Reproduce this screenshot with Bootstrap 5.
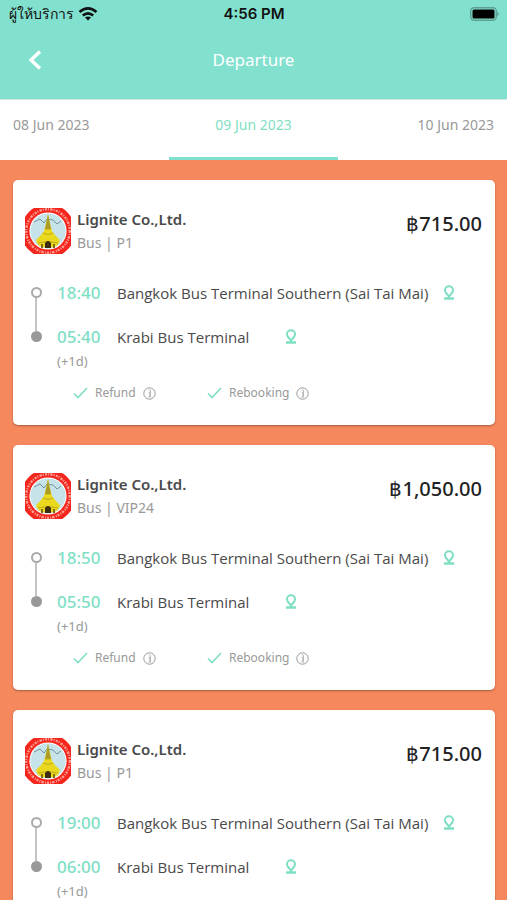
<!DOCTYPE html>
<html lang="en">
<head>
<meta charset="utf-8">
<meta name="viewport" content="width=device-width, initial-scale=1">
<title>Departure</title>
<link rel="stylesheet" href="https://cdn.jsdelivr.net/npm/bootstrap@5.3.0/dist/css/bootstrap.min.css">
<style>
:root { --mint: #82e1ce; --mint-ink: #7fdfc5; --coral: #f6885e; --ink: #4a4a4a; --soft: #999; }
body { font-family: "Noto Sans", "Open Sans", sans-serif; background: var(--coral); color: var(--ink); }
button { font: inherit; color: inherit; }
svg { display: block; }
.topbar { background: var(--mint); }
.status { height: 28px; padding: 0 8px 0 9px; color: #111; font-family: Inter, sans-serif; font-size: 15px; line-height: 28px; }
.status > * { flex: 1 1 0; }
.carrier { font-size: 14px; font-weight: 500; }
.clock { font-weight: 600; }
.titlebar { height: 71px; padding: 0 24px 8px; }
.titlebar > * { flex: 1 1 0; }
.titlebar h1 { font-size: 17px; line-height: 24px; color: #fff; font-weight: 400; }
.plain { display: block; background: none; border: 0; padding: 0; }
.dates { height: 61px; background: #fff; border-top: 1px solid #d5e5e1; }
.dates a { flex: 1 1 0; padding: 13px 13px 0; font-size: 14px; line-height: 24px; color: var(--soft); text-decoration: none; border-bottom: 3px solid transparent; }
.dates a.current { color: var(--mint-ink); border-color: var(--mint); }
.trips { padding: 20px 12px 20px 13px; gap: 20px; }
.trip { background: #fff; border-radius: 5px; padding: 28px 13px 20px 12px; box-shadow: 0 1px 2px rgba(90, 50, 30, .5); }
.trip-operator { padding-left: 6px; }
.operator { font-size: 15px; line-height: 22px; font-weight: 600; }
.vehicle { font-size: 14px; line-height: 26px; color: var(--soft); }
.fare { font-size: 20px; line-height: 32px; font-weight: 500; color: #222; }
.route { margin-top: 25px; }
.rail { width: 22px; padding: 6px 0; }
.dot-open, .dot-full { width: 11px; height: 11px; border-radius: 50%; border: 2px solid #aaa; }
.dot-full { background: #999; border-color: #999; }
.rail-line { width: 2px; height: 33px; background: #c4c4c4; }
.stops { padding-left: 10px; }
.stop { height: 24px; line-height: 24px; }
.stop + .stop { margin-top: 20px; }
.hour { width: 60px; font-size: 17px; font-weight: 500; color: var(--mint-ink); }
.place { font-family: "Open Sans", "Noto Sans", sans-serif; font-size: 15px; min-width: 168px; padding-right: 15px; }
.next-day { font-size: 13px; line-height: 24px; color: var(--soft); }
.perks { padding-left: 48px; margin-top: 8px; font-size: 12px; line-height: 24px; color: var(--soft); }
.perk { gap: 7px; min-width: 134px; }
</style>
<script src="https://cdn.jsdelivr.net/npm/bootstrap@5.3.0/dist/js/bootstrap.bundle.min.js"></script>
</head>
<body class="vh-100 overflow-hidden">
<svg width="0" height="0" class="position-absolute" aria-hidden="true">
  <defs>
    <clipPath id="seal-clip"><circle cx="23" cy="23" r="27"/></clipPath>
    <symbol id="seal" viewBox="0 0 46 46">
      <g clip-path="url(#seal-clip)">
        <rect width="46" height="46" fill="#f5261d"/>
        <circle cx="23" cy="23" r="21.800" fill="none" stroke="#ff9d92" stroke-width="2.400" stroke-dasharray="2 1 1 1.4 2.4 1 1 1.2"/>
        <circle cx="23" cy="23" r="18.600" fill="#fff"/>
        <circle cx="23" cy="23" r="17.600" fill="#c5e3e9"/>
        <path d="M9 14q4-2 6-3l4 4 3-4 6 1 4 4 4-3" fill="none" stroke="#74929b"/>
        <path d="M23 6l2 9 2 8 3 4 5 5-2 5q-10 6-20 0l-2-5 5-5 3-4 2-8z" fill="#ead81f"/>
        <path d="M23 6l1.500 8 1.500 7h-6l1.500-7z" fill="#a99c27"/>
        <path d="M20 21h6M18 25q5 3 10 0M13 35q10-3 20 0" fill="none" stroke="#c0aa18"/>
        <path d="M20 40v-5q3-4 6 0v5z" fill="#3b2c12"/>
        <path d="M17 36v4M29 36v4" stroke="#866912" stroke-width="2"/>
      </g>
    </symbol>
    <symbol id="pin" viewBox="0 0 12 16">
      <path d="M6 11.300C4 9 1.900 7.600 1.900 5.300a4.100 4.100 0 0 1 8.200 0C10.100 7.600 8 9 6 11.300z" fill="none" stroke="#7fdfc5" stroke-width="2"/>
      <path d="M6 10v3M1 13.500h10" fill="none" stroke="#7fdfc5" stroke-width="2.400"/>
    </symbol>
    <symbol id="tick" viewBox="0 0 15 12"><path d="M1 6.500l4 4L14 1" fill="none" stroke="#7fdfc5" stroke-width="1.600"/></symbol>
    <symbol id="info" viewBox="0 0 13 13">
      <circle cx="6.500" cy="6.500" r="5.700" fill="none" stroke="#999"/>
      <path d="M5.500 5.200h1.300v4.600M5.300 10h3M5.600 3.200q1-1.200 1.900 0v6.300" fill="none" stroke="#aaa" stroke-width=".8"/>
    </symbol>
  </defs>
</svg>

<header class="topbar">
  <div class="status d-flex align-items-center">
    <div class="d-flex align-items-center gap-1">
      <span class="carrier">ผู้ให้บริการ</span>
      <svg width="20" height="14" viewBox="0 0 20 14" role="img" aria-label="Wi-Fi"><g fill="none" stroke="#111" stroke-width="2.600"><path d="M1.500 5q8.500-7.200 17 0"/><path d="M4.800 8.500q5.200-4.400 10.400 0"/></g><path d="M10 13.500l-3-3q3-2.200 6 0z" fill="#111"/></svg>
    </div>
    <div class="clock text-center">4:56 PM</div>
    <div class="d-flex justify-content-end">
      <svg width="30" height="14" viewBox="0 0 30 14" role="img" aria-label="Battery"><rect x="1.700" y=".7" width="25.600" height="12.600" rx="3.500" fill="none" stroke="#5d9f92" stroke-width="1.400"/><rect x="3.500" y="2.500" width="22" height="9" rx="1.500" fill="#000"/><path d="M28.300 4.500q3 2.500 0 5z" fill="#5d9f92"/></svg>
    </div>
  </div>
  <div class="titlebar d-flex align-items-center">
    <div><button class="plain" type="button" aria-label="Back"><svg width="20" height="20" viewBox="0 0 20 20"><path d="M16 1.500L7 10l9 8.500" fill="none" stroke="#fff" stroke-width="3.400"/></svg></button></div>
    <h1 class="m-0 text-center">Departure</h1>
    <div></div>
  </div>
</header>
<nav class="dates d-flex" aria-label="Travel date">
  <a href="#previous">08 Jun 2023</a>
  <a class="current text-center" href="#selected" aria-current="date">09 Jun 2023</a>
  <a class="text-end" href="#next">10 Jun 2023</a>
</nav>

<main class="trips d-flex flex-column">
  <article class="trip">
    <div class="d-flex">
      <svg class="flex-shrink-0" width="46" height="46" role="img" aria-label="Operator logo"><use href="#seal"/></svg>
      <div class="flex-grow-1 trip-operator">
        <div class="operator">Lignite Co.,Ltd.</div>
        <div class="vehicle">Bus | P1</div>
      </div>
      <div class="fare">฿715.00</div>
    </div>
    <div class="route d-flex">
      <div class="rail d-flex flex-column align-items-center"><span class="dot-open"></span><span class="rail-line"></span><span class="dot-full"></span></div>
      <div class="stops">
        <div class="stop d-flex align-items-center"><span class="hour">18:40</span><span class="place">Bangkok Bus Terminal Southern (Sai Tai Mai)</span><button class="plain" type="button" aria-label="Show on map"><svg width="12" height="16"><use href="#pin"/></svg></button></div>
        <div class="stop d-flex align-items-center"><span class="hour">05:40</span><span class="place">Krabi Bus Terminal</span><button class="plain" type="button" aria-label="Show on map"><svg width="12" height="16"><use href="#pin"/></svg></button></div>
        <div class="next-day">(+1d)</div>
      </div>
    </div>
    <div class="perks d-flex">
      <div class="perk d-flex align-items-center"><svg width="15" height="12"><use href="#tick"/></svg><span>Refund</span><button class="plain" type="button" aria-label="Refund details"><svg width="13" height="13"><use href="#info"/></svg></button></div>
      <div class="perk d-flex align-items-center"><svg width="15" height="12"><use href="#tick"/></svg><span>Rebooking</span><button class="plain" type="button" aria-label="Rebooking details"><svg width="13" height="13"><use href="#info"/></svg></button></div>
    </div>
  </article>

  <article class="trip">
    <div class="d-flex">
      <svg class="flex-shrink-0" width="46" height="46" role="img" aria-label="Operator logo"><use href="#seal"/></svg>
      <div class="flex-grow-1 trip-operator">
        <div class="operator">Lignite Co.,Ltd.</div>
        <div class="vehicle">Bus | VIP24</div>
      </div>
      <div class="fare">฿1,050.00</div>
    </div>
    <div class="route d-flex">
      <div class="rail d-flex flex-column align-items-center"><span class="dot-open"></span><span class="rail-line"></span><span class="dot-full"></span></div>
      <div class="stops">
        <div class="stop d-flex align-items-center"><span class="hour">18:50</span><span class="place">Bangkok Bus Terminal Southern (Sai Tai Mai)</span><button class="plain" type="button" aria-label="Show on map"><svg width="12" height="16"><use href="#pin"/></svg></button></div>
        <div class="stop d-flex align-items-center"><span class="hour">05:50</span><span class="place">Krabi Bus Terminal</span><button class="plain" type="button" aria-label="Show on map"><svg width="12" height="16"><use href="#pin"/></svg></button></div>
        <div class="next-day">(+1d)</div>
      </div>
    </div>
    <div class="perks d-flex">
      <div class="perk d-flex align-items-center"><svg width="15" height="12"><use href="#tick"/></svg><span>Refund</span><button class="plain" type="button" aria-label="Refund details"><svg width="13" height="13"><use href="#info"/></svg></button></div>
      <div class="perk d-flex align-items-center"><svg width="15" height="12"><use href="#tick"/></svg><span>Rebooking</span><button class="plain" type="button" aria-label="Rebooking details"><svg width="13" height="13"><use href="#info"/></svg></button></div>
    </div>
  </article>

  <article class="trip">
    <div class="d-flex">
      <svg class="flex-shrink-0" width="46" height="46" role="img" aria-label="Operator logo"><use href="#seal"/></svg>
      <div class="flex-grow-1 trip-operator">
        <div class="operator">Lignite Co.,Ltd.</div>
        <div class="vehicle">Bus | P1</div>
      </div>
      <div class="fare">฿715.00</div>
    </div>
    <div class="route d-flex">
      <div class="rail d-flex flex-column align-items-center"><span class="dot-open"></span><span class="rail-line"></span><span class="dot-full"></span></div>
      <div class="stops">
        <div class="stop d-flex align-items-center"><span class="hour">19:00</span><span class="place">Bangkok Bus Terminal Southern (Sai Tai Mai)</span><button class="plain" type="button" aria-label="Show on map"><svg width="12" height="16"><use href="#pin"/></svg></button></div>
        <div class="stop d-flex align-items-center"><span class="hour">06:00</span><span class="place">Krabi Bus Terminal</span><button class="plain" type="button" aria-label="Show on map"><svg width="12" height="16"><use href="#pin"/></svg></button></div>
        <div class="next-day">(+1d)</div>
      </div>
    </div>
  </article>
</main>
</body>
</html>
